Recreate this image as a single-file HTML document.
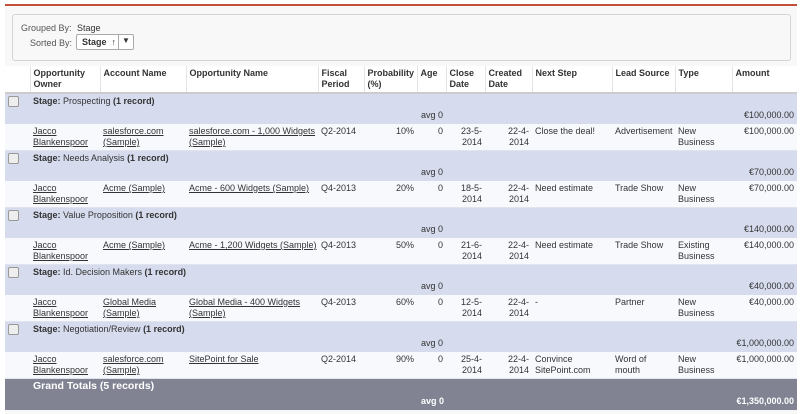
<!DOCTYPE html>
<html><head><style>
body{margin:0;width:800px;height:414px;background:#fff;font-family:"Liberation Sans",Arial,sans-serif;font-size:9px;color:#333;position:relative;overflow:hidden}
.top{position:absolute;left:5px;top:4px;width:792px;height:2px;background:#c0503a}
.panel{position:absolute;left:5px;top:6px;width:792px;height:408px;background:#f8f8f8}
.box{position:absolute;left:12px;top:14px;width:777px;height:45px;border:1px solid #d4d4d4;border-radius:3px;background:#f8f8f8}
.lbl{position:absolute;color:#555}
.sel{position:absolute;left:76px;top:34px;width:56px;height:14px;border:1px solid #aaa;border-radius:2px;background:#fff;font-weight:bold;color:#333}
table{position:absolute;left:5px;top:66px;width:792px;border-collapse:collapse;table-layout:fixed}
td,th{padding:2px 3px;vertical-align:top;line-height:11px;overflow:hidden;white-space:nowrap}
th{text-align:left;font-weight:bold;height:20px;background:#fff;border-right:1px solid #e4e4e4;border-bottom:2px solid #ccc;white-space:normal}
tr.g td{background:#d6dcee;height:26px}
tr.d td{background:#f7f9fd;height:22px;border-bottom:1px solid #e0e4ee}
tr.t td{background:#818393;color:#fff;font-weight:bold;height:26px}
a{color:#333;text-decoration:underline}
.r{text-align:right}
.cb{display:inline-block;width:9px;height:9px;border:1px solid #999;border-radius:2px;background:#eee}
</style></head><body>
<div class="panel"></div>
<div class="top"></div>
<div class="box"></div>
<div class="lbl" style="left:21px;top:23px">Grouped By:</div>
<div class="lbl" style="left:77px;top:23px;color:#333">Stage</div>
<div class="lbl" style="left:30px;top:38px">Sorted By:</div>
<div class="sel"><span style="position:absolute;left:5px;top:2px">Stage &nbsp;↑</span><span style="position:absolute;left:41px;top:0;width:1px;height:14px;background:#aaa"></span><span style="position:absolute;left:45px;top:1px;font-size:8px">▼</span></div>
<table>
<colgroup><col style="width:25px"><col style="width:70px"><col style="width:86px"><col style="width:132px"><col style="width:46px"><col style="width:53px"><col style="width:29px"><col style="width:39px"><col style="width:47px"><col style="width:80px"><col style="width:63px"><col style="width:57px"><col style="width:65px"></colgroup>
<tr><th></th><th>Opportunity Owner</th><th>Account Name</th><th>Opportunity Name</th><th>Fiscal Period</th><th>Probability (%)</th><th>Age</th><th>Close Date</th><th>Created Date</th><th>Next Step</th><th>Lead&nbsp;Source</th><th>Type</th><th style="border-right:0">Amount</th></tr>

<tr class="g"><td><span class="cb"></span></td><td colspan="12"><b>Stage:</b> Prospecting <b>(1 record)</b><div style="position:relative;height:12px;margin-top:3px"><span style="position:absolute;left:388px">avg 0</span><span style="position:absolute;right:0">€100,000.00</span></div></td></tr>
<tr class="d"><td></td><td><a>Jacco<br>Blankenspoor</a></td><td><a>salesforce.com<br>(Sample)</a></td><td><a>salesforce.com - 1,000 Widgets<br>(Sample)</a></td><td>Q2-2014</td><td class="r">10%</td><td class="r">0</td><td class="r">23-5-<br>2014</td><td class="r">22-4-<br>2014</td><td>Close the deal!</td><td>Advertisement</td><td>New<br>Business</td><td class="r">€100,000.00</td></tr>

<tr class="g"><td><span class="cb"></span></td><td colspan="12"><b>Stage:</b> Needs Analysis <b>(1 record)</b><div style="position:relative;height:12px;margin-top:3px"><span style="position:absolute;left:388px">avg 0</span><span style="position:absolute;right:0">€70,000.00</span></div></td></tr>
<tr class="d"><td></td><td><a>Jacco<br>Blankenspoor</a></td><td><a>Acme (Sample)</a></td><td><a>Acme - 600 Widgets (Sample)</a></td><td>Q4-2013</td><td class="r">20%</td><td class="r">0</td><td class="r">18-5-<br>2014</td><td class="r">22-4-<br>2014</td><td>Need estimate</td><td>Trade Show</td><td>New<br>Business</td><td class="r">€70,000.00</td></tr>

<tr class="g"><td><span class="cb"></span></td><td colspan="12"><b>Stage:</b> Value Proposition <b>(1 record)</b><div style="position:relative;height:12px;margin-top:3px"><span style="position:absolute;left:388px">avg 0</span><span style="position:absolute;right:0">€140,000.00</span></div></td></tr>
<tr class="d"><td></td><td><a>Jacco<br>Blankenspoor</a></td><td><a>Acme (Sample)</a></td><td><a>Acme - 1,200 Widgets (Sample)</a></td><td>Q4-2013</td><td class="r">50%</td><td class="r">0</td><td class="r">21-6-<br>2014</td><td class="r">22-4-<br>2014</td><td>Need estimate</td><td>Trade Show</td><td>Existing<br>Business</td><td class="r">€140,000.00</td></tr>

<tr class="g"><td><span class="cb"></span></td><td colspan="12"><b>Stage:</b> Id. Decision Makers <b>(1 record)</b><div style="position:relative;height:12px;margin-top:3px"><span style="position:absolute;left:388px">avg 0</span><span style="position:absolute;right:0">€40,000.00</span></div></td></tr>
<tr class="d"><td></td><td><a>Jacco<br>Blankenspoor</a></td><td><a>Global Media<br>(Sample)</a></td><td><a>Global Media - 400 Widgets<br>(Sample)</a></td><td>Q4-2013</td><td class="r">60%</td><td class="r">0</td><td class="r">12-5-<br>2014</td><td class="r">22-4-<br>2014</td><td>-</td><td>Partner</td><td>New<br>Business</td><td class="r">€40,000.00</td></tr>

<tr class="g"><td><span class="cb"></span></td><td colspan="12"><b>Stage:</b> Negotiation/Review <b>(1 record)</b><div style="position:relative;height:12px;margin-top:3px"><span style="position:absolute;left:388px">avg 0</span><span style="position:absolute;right:0">€1,000,000.00</span></div></td></tr>
<tr class="d"><td></td><td><a>Jacco<br>Blankenspoor</a></td><td><a>salesforce.com<br>(Sample)</a></td><td><a>SitePoint for Sale</a></td><td>Q2-2014</td><td class="r">90%</td><td class="r">0</td><td class="r">25-4-<br>2014</td><td class="r">22-4-<br>2014</td><td>Convince<br>SitePoint.com</td><td>Word of<br>mouth</td><td>New<br>Business</td><td class="r">€1,000,000.00</td></tr>

<tr class="t"><td></td><td colspan="12" style="font-size:10.5px">Grand Totals (5 records)<div style="position:relative;height:12px;margin-top:4px;font-size:9px"><span style="position:absolute;left:388px">avg 0</span><span style="position:absolute;right:0">€1,350,000.00</span></div></td></tr>
</table>
</body></html>
